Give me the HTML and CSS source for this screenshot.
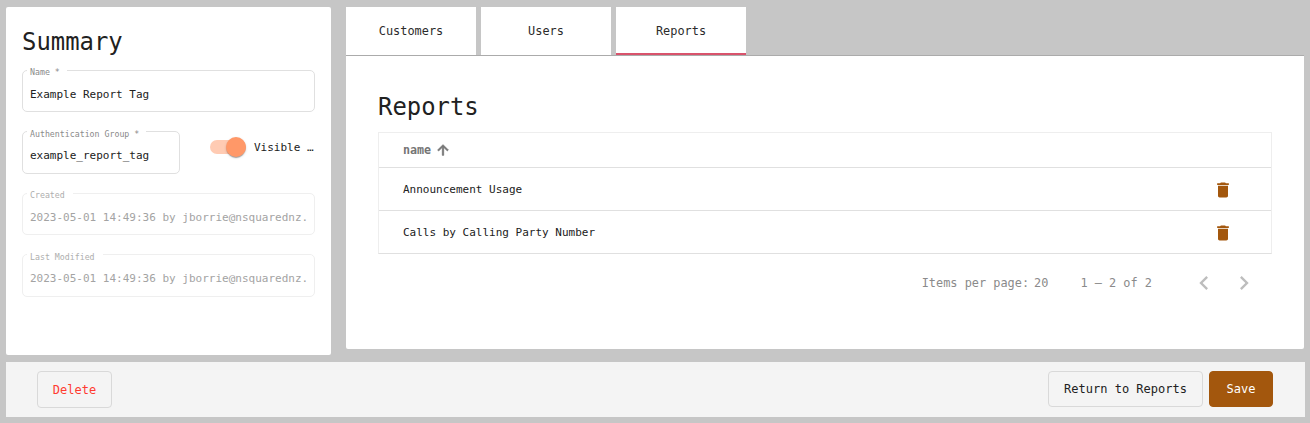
FILE: index.html
```html
<!DOCTYPE html>
<html lang="en">
<head>
<meta charset="utf-8">
<title>Report Tag</title>
<link rel="stylesheet" href="styles.css">
</head>
<body>
<div class="page">
  <div class="main">
    <aside class="summary">
      <h2 class="summary-title">Summary</h2>
      <div class="field field-name">
        <span class="field-label">Name *</span>
        <span class="field-value">Example Report Tag</span>
      </div>
      <div class="field-row">
        <div class="field field-group">
          <span class="field-label">Authentication Group *</span>
          <span class="field-value">example_report_tag</span>
        </div>
        <div class="toggle">
          <span class="toggle-track"><span class="toggle-thumb"></span></span>
          <span class="toggle-label">Visible …</span>
        </div>
      </div>
      <div class="field field-disabled field-created">
        <span class="field-label">Created</span>
        <span class="field-value">2023-05-01 14:49:36 by jborrie@nsquarednz.</span>
      </div>
      <div class="field field-disabled field-modified">
        <span class="field-label">Last Modified</span>
        <span class="field-value">2023-05-01 14:49:36 by jborrie@nsquarednz.</span>
      </div>
    </aside>
    <section class="content">
      <nav class="tabs">
        <div class="tab">Customers</div>
        <div class="tab">Users</div>
        <div class="tab tab-active">Reports</div>
      </nav>
      <div class="panel">
        <h2 class="panel-title">Reports</h2>
        <div class="table">
          <div class="row row-head">
            <span class="head-name">name</span>
            <svg class="sort-icon" viewBox="0 0 24 24"><path d="M4 12l1.41 1.41L11 7.83V20h2V7.83l5.58 5.59L20 12l-8-8-8 8z"/></svg>
          </div>
          <div class="row">
            <span class="cell-name">Announcement Usage</span>
            <svg class="trash" viewBox="0 0 24 24"><path d="M6 19c0 1.1.9 2 2 2h8c1.1 0 2-.9 2-2V7H6v12zM19 4h-3.5l-1-1h-5l-1 1H5v2h14V4z"/></svg>
          </div>
          <div class="row">
            <span class="cell-name">Calls by Calling Party Number</span>
            <svg class="trash" viewBox="0 0 24 24"><path d="M6 19c0 1.1.9 2 2 2h8c1.1 0 2-.9 2-2V7H6v12zM19 4h-3.5l-1-1h-5l-1 1H5v2h14V4z"/></svg>
          </div>
        </div>
        <div class="paginator">
          <span class="per-page">Items per page:</span>
          <span class="per-value">20</span>
          <span class="range">1 – 2 of 2</span>
          <svg class="chev" viewBox="0 0 24 24"><path d="M15.41 7.41L14 6l-6 6 6 6 1.41-1.41L10.83 12z"/></svg>
          <svg class="chev chev-next" viewBox="0 0 24 24"><path d="M10 6L8.59 7.41 13.17 12l-4.58 4.59L10 18l6-6z"/></svg>
        </div>
      </div>
    </section>
  </div>
  <footer class="footer">
    <button class="btn btn-delete">Delete</button>
    <div class="footer-right">
      <button class="btn btn-return">Return to Reports</button>
      <button class="btn btn-save">Save</button>
    </div>
  </footer>
</div>
</body>
</html>
```
FILE: styles.css
```css
* { box-sizing: border-box; }
html, body { margin: 0; padding: 0; }
body {
  width: 1310px;
  height: 423px;
  overflow: hidden;
  background: #c6c6c6;
  color: #212121;
  font-family: "DejaVu Sans Mono", "Liberation Mono", monospace;
  font-size: 11px;
}
.page { padding: 7px 5px 0 6px; display: flex; flex-direction: column; gap: 7px; }
.main { display: flex; gap: 15px; height: 348px; }

.summary {
  width: 325px;
  background: #fff;
  border-radius: 2px;
  padding: 21px 16px 0;
}
.summary-title, .panel-title {
  margin: 0;
  font-size: 23.9px;
  font-weight: 400;
  line-height: 28px;
  color: #212121;
}
.field {
  position: relative;
  border: 1px solid #e0e0e0;
  border-radius: 5px;
  padding: 0 7px;
  display: flex;
  align-items: center;
  background: #fff;
}
.field-name { height: 42px; margin-top: 14px; padding-top: 8px; }
.field-row { display: flex; align-items: flex-start; margin-top: 19px; }
.field-group { width: 158px; height: 43px; padding-top: 6px; }
.field-created { height: 42px; margin-top: 19px; padding-top: 7px; }
.field-modified { height: 43px; margin-top: 19px; padding-top: 6px; }
.field-label {
  position: absolute;
  left: 4px;
  top: -4px;
  padding: 0 3px;
  background: #fff;
  font-size: 8.25px;
  line-height: 10px;
  color: #8a8a8a;
  white-space: nowrap;
}
.field-group .field-label, .field-modified .field-label { top: -3px; }
.field-value { white-space: nowrap; line-height: 14px; }
.field-disabled { border-color: #efefef; }
.field-disabled .field-value { color: #a3a3a3; }
.field-disabled .field-label { color: #aeaeae; padding-right: 8px; }
.field-name .field-label, .field-group .field-label { padding-right: 7px; }

.toggle { display: flex; align-items: center; margin: 9px 0 0 30px; }
.toggle-track {
  position: relative;
  display: block;
  width: 36px;
  height: 14px;
  border-radius: 7px;
  background: #ffcbb3;
}
.toggle-thumb {
  position: absolute;
  right: 0;
  top: -3px;
  width: 20px;
  height: 20px;
  border-radius: 50%;
  background: #ff9868;
  box-shadow: 0 2px 1px -1px rgba(0,0,0,.2), 0 1px 1px rgba(0,0,0,.14), 0 1px 3px rgba(0,0,0,.12);
}
.toggle-label { margin-left: 8px; white-space: nowrap; }

.content { width: 958px; display: flex; flex-direction: column; }
.tabs { display: flex; gap: 5px; height: 49px; border-bottom: 1px solid #ababab; }
.tab {
  width: 130px;
  height: 48px;
  background: #fff;
  display: flex;
  align-items: center;
  justify-content: center;
  color: #2b2b2b;
  font-size: 11.9px;
}
.tab-active { border-bottom: 2px solid #d9536c; padding-top: 2px; }
.panel {
  height: 293px;
  background: #fff;
  padding: 37px 32px 0;
  border-radius: 0 0 2px 2px;
}
.table { margin-top: 11px; border: 1px solid #eeeeee; border-bottom-color: #e0e0e0; }
.row {
  display: flex;
  align-items: center;
  height: 43px;
  padding: 0 38px 0 24px;
  border-top: 1px solid #e0e0e0;
  color: #212121;
  font-size: 11px;
}
.row-head { height: 34px; border-top: 0; }
.head-name { font-size: 11.7px; font-weight: 700; color: #757575; }
.sort-icon { width: 16px; height: 16px; fill: #757575; stroke: #757575; stroke-width: 1.2; margin-left: 4px; }
.cell-name { flex: 1; }
.trash { width: 20px; height: 20px; fill: #a3570d; margin-top: 1px; }

.paginator { display: flex; align-items: center; height: 58px; color: #8a8a8a; font-size: 11.9px; }
.per-page { margin-left: auto; }
.per-value { margin-left: 5px; }
.range { margin-left: 32px; }
.chev { width: 28px; height: 28px; fill: #bdbdbd; margin-left: 38px; }
.chev-next { margin-left: 12px; margin-right: 14px; }

.footer {
  height: 55px;
  width: 1299px;
  background: #f4f4f4;
  display: flex;
  align-items: flex-start;
  justify-content: space-between;
  padding: 9px 32px 0 31px;
}
.footer-right { display: flex; gap: 6px; }
.btn {
  height: 36px;
  border: 1px solid #d9d9d9;
  border-radius: 4px;
  background: #f4f4f4;
  font-family: inherit;
  font-size: 12px;
  padding: 0;
  color: #212121;
}
.btn-delete { width: 75px; height: 37px; color: #ff3b30; }
.btn-return { width: 155px; }
.btn-save { width: 64px; background: #a3570d; border-color: #a3570d; color: #fff; }
```
